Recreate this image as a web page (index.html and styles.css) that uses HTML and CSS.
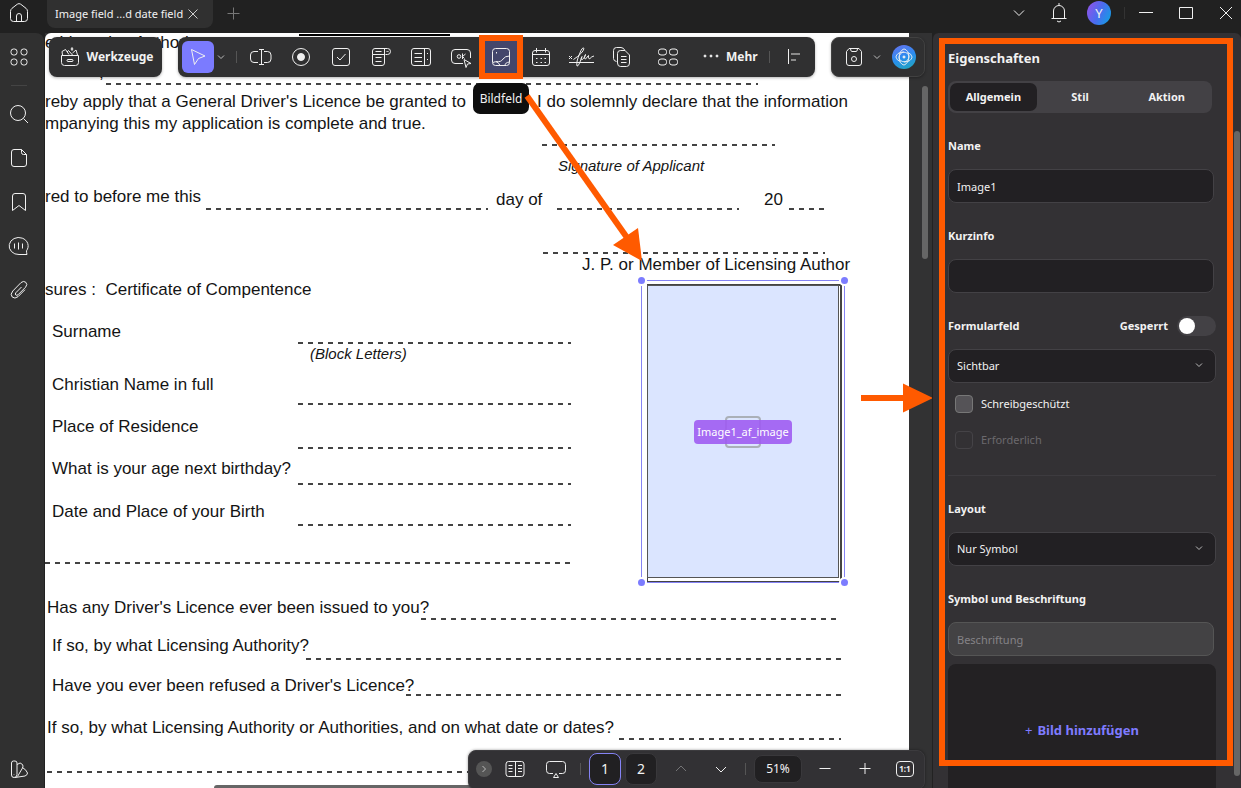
FILE: index.html
```html
<!DOCTYPE html>
<html lang="de">
<head>
<meta charset="utf-8">
<title>PDF-Formular bearbeiten</title>
<link rel="stylesheet" href="styles.css">
</head>
<body>
<div class="app">
  <header class="titlebar">
    <button class="home" aria-label="Start"><svg class="ic" viewBox="0 0 20 20"><path d="M1.5 8.500Q1.500 6.500 3 5.300L8.300 1.200Q10 0 11.700 1.200L17 5.300Q18.500 6.500 18.500 8.500V15.500Q18.500 18.500 15.500 18.500H4.500Q1.500 18.500 1.500 15.500ZM7.500 18.500V13a2.500 2.500 0 0 1 5 0V18.500"/></svg></button>
    <div class="filetab"><span>Image field ...d date field</span><button aria-label="Tab schließen"><svg class="ic tiny" viewBox="0 0 10 10"><path d="M0.500 0.500L9.500 9.500M9.500 0.500L0.500 9.500"/></svg></button></div>
    <button class="newtab" aria-label="Neuer Tab"><svg class="ic dim" viewBox="0 0 20 20"><path d="M10.500 4.500V16.500M4.500 10.500H16.500"/></svg></button>
    <div class="winctl">
      <button aria-label="Mehr Tabs"><svg class="ic" viewBox="0 0 20 20"><path d="M5 7.500L10 12.500L15 7.500"/></svg></button>
      <button aria-label="Benachrichtigungen"><svg class="ic" viewBox="0 0 20 20"><path d="M4.500 15V8a5.500 5.500 0 0 1 11 0V15M2.500 15.500H17.500M10 2.500V0M8 18Q10 20 12 18"/></svg></button>
      <button class="avatar" aria-label="Konto">Y</button>
      <i class="vline"></i>
      <button aria-label="Minimieren"><svg class="ic" viewBox="0 0 20 20"><path d="M3 9.500H17"/></svg></button>
      <button aria-label="Maximieren"><svg class="ic" viewBox="0 0 20 20"><path d="M3.500 4.500H16.500V15.500H3.500Z"/></svg></button>
      <button aria-label="Schließen"><svg class="ic" viewBox="0 0 20 20"><path d="M4 4L16 16M16 4L4 16"/></svg></button>
    </div>
  </header>

  <div class="work">
    <nav class="rail">
      <button aria-label="Übersicht"><svg class="ic" viewBox="0 0 20 20"><rect x="2" y="2" width="6" height="6" rx="2.500"/><rect x="12" y="2" width="6" height="6" rx="2.500"/><rect x="2" y="12" width="6" height="6" rx="2.500"/><rect x="12" y="12" width="6" height="6" rx="2.500"/></svg></button>
      <hr>
      <button aria-label="Suchen"><svg class="ic" viewBox="0 0 20 20"><circle cx="9" cy="9" r="7.500"/><path d="M14.500 14.500L19 19"/></svg></button>
      <button aria-label="Seiten"><svg class="ic" viewBox="0 0 20 20"><path d="M12.500 1.500H5Q2.500 1.500 2.500 4V16Q2.500 18.500 5 18.500H15Q17.500 18.500 17.500 16V6.500ZM12.500 1.500V4.500Q12.500 6.500 14.500 6.500H17.500"/></svg></button>
      <button aria-label="Lesezeichen"><svg class="ic" viewBox="0 0 20 20"><path d="M3.500 18.500V4Q3.500 1.500 6 1.500H14Q16.500 1.500 16.500 4V18.500L10 13.500Z"/></svg></button>
      <button aria-label="Kommentare"><svg class="ic" viewBox="0 0 20 20"><path d="M18 18.500H10A9.500 8.500 0 1 1 17.500 14.800Q17.500 16.800 18 18.500ZM5.500 7.500V12.500M9.500 6.500V13.500M13.500 7.500V12.500"/></svg></button>
      <button aria-label="Anhänge"><svg class="ic" viewBox="0 0 20 20"><path d="M12.500 7L6.800 12.800Q5.800 14.200 6.800 15Q7.800 15.700 9 14.800L16.600 7.200Q19 4.300 16.700 2.200Q14.500 .5 12 2.600L3.800 11Q.8 14.500 3.200 17Q5.800 19.300 9 16.700L16 9.700"/></svg></button>
      <button class="last" aria-label="Design"><svg class="ic" viewBox="0 0 20 20"><path d="M2.500 4Q2.500 2 4.500 2H6Q8 2 8 4V15.500Q8 18.500 5 18.500Q2.500 18.500 2.500 16ZM8 5.500Q11.500 2.500 13.500 5.500Q14.500 7 13.500 9L8.500 17.500M13.500 8.500Q17.500 11 18.500 14Q18.500 16 16 17L6 18.500M5 15.500V16"/></svg></button>
    </nav>

    <main class="viewport">
      <article class="page">
        <div class="row r0"><span>e Licensing Authority</span><i class="bar"></i></div>
        <div class="row r1"><span>,</span><i class="rule h22"></i></div>
        <p class="para"><span class="lead">reby apply that a General Driver's Licence be granted to</span>I do solemnly declare that the information<br>mpanying this my application is complete and true.</p>
        <div class="row r3"><i class="rule h12"></i></div>
        <div class="row r4 note">Signature of Applicant</div>
        <div class="row r5"><span class="w162">red to before me this</span><i class="rule w282"></i><span class="low day">day of</span><i class="rule w182"></i><span class="low year">20</span><i class="rule w36"></i></div>
        <div class="row r6"><i class="rule h12"></i></div>
        <div class="row r7"><span>J. P. or Member of Licensing Author</span></div>
        <div class="row r8"><span>sures :&nbsp; Certificate of Compentence</span></div>
        <div class="field r9"><span>Surname</span><i class="rule h22"></i></div>
        <div class="row r9b note">(Block Letters)</div>
        <div class="field r10"><span>Christian Name in full</span><i class="rule h30"></i></div>
        <div class="field r11"><span>Place of Residence</span><i class="rule h32"></i></div>
        <div class="field r12"><span>What is your age next birthday?</span><i class="rule h26"></i></div>
        <div class="field r13"><span>Date and Place of your Birth</span><i class="rule h24"></i></div>
        <div class="row r14"><i class="rule h12"></i></div>
        <div class="row ask r15"><span>Has any Driver's Licence ever been issued to you?</span><i class="rule h22"></i></div>
        <div class="row ask in r16"><span>If so, by what Licensing Authority?</span><i class="rule h24"></i></div>
        <div class="row ask in r17"><span>Have you ever been refused a Driver's Licence?</span><i class="rule h20"></i></div>
        <div class="row ask r18"><span>If so, by what Licensing Authority or Authorities, and on what date or dates?</span><i class="rule h22"></i></div>
        <div class="row r19"><i class="rule h12"></i></div>
      </article>

      <div class="imgfield">
        <div class="outline"></div>
        <div class="fill"><i class="ghost"></i><span>Image1_af_image</span></div>
        <i class="dot tl"></i><i class="dot tr"></i><i class="dot bl"></i><i class="dot br"></i>
      </div>
      <i class="vthumb"></i><i class="hthumb"></i>

      <div class="tools">
        <button class="island werk"><svg class="ic" viewBox="0 0 20 20"><path d="M1.500 8.500H18.500V15.500Q18.500 18.500 15.500 18.500H4.500Q1.500 18.500 1.500 15.500ZM7 13.500Q7 12.500 8 12.500H12Q13 12.500 13 13.500Q13 14.500 12 14.500H8Q7 14.500 7 13.500ZM2.500 8L2 4.500L5.500 2.500L9 7.500M7 5L8.500 3.500L12.500 8M12 .5L13 2L12 3.500L11 2ZM12.500 6L16 3L17.500 8"/></svg>Werkzeuge</button>
        <div class="island main">
          <button class="cursor" aria-label="Auswahl"><svg class="ic" viewBox="0 0 20 20"><path d="M3.500 2.500L17 9L10.500 11.500L6.500 17.500Z"/></svg></button>
          <svg class="ic caret" viewBox="0 0 10 10"><path d="M2 3.500L5 6.500L8 3.500"/></svg>
          <i class="sep"></i>
          <div class="icons">
            <button aria-label="Textfeld"><svg class="ic wide" viewBox="0 0 24 20"><path d="M9 4.500H5Q1.500 4.500 1.500 8V12Q1.500 15.500 5 15.500H9M15 4.500H18.500Q22 4.500 22 8V12Q22 15.500 18.500 15.500H15M12.500 2.500V17.500M10 2.500H15M10 17.500H15"/></svg></button>
            <button aria-label="Optionsfeld"><svg class="ic" viewBox="0 0 20 20"><circle cx="10" cy="10" r="8.500"/><circle class="solid" cx="10" cy="10" r="3.500"/></svg></button>
            <button aria-label="Kontrollkästchen"><svg class="ic" viewBox="0 0 20 20"><rect x="1.500" y="1.500" width="17" height="17" rx="2.500"/><path d="M6 10L9 13L14.500 7"/></svg></button>
            <button aria-label="Dropdown"><svg class="ic" viewBox="0 0 20 20"><path d="M13.500 7.500H1.500V4Q1.500 1.500 4 1.500H16.500Q19.500 1.500 19.500 4.500Q19.500 7.500 16.500 7.500H14.500M13.500 1.500V16Q13.500 18.500 11 18.500H4Q1.500 18.500 1.500 16V7.500M4.500 4.500H10.500M4.500 10.500H10.500M4.500 14.500H10.500M15.500 4L16.500 5L17.500 4"/></svg></button>
            <button aria-label="Listenfeld"><svg class="ic" viewBox="0 0 20 20"><rect x=".5" y="1.500" width="19" height="17" rx="2.500"/><path d="M13.500 1.500V18.500M3.500 6.500H11M3.500 10.500H11M3.500 14.500H11M16 6.500H17M16 12.500H17"/></svg></button>
            <button aria-label="Schaltfläche"><svg class="ic" viewBox="0 0 20 20"><path d="M12 16.500H4Q.5 16.500 .5 13V6Q.5 2.500 4 2.500H16Q19.500 2.500 19.500 6V11M13 12.500L15 20.500L16.500 17L20 16.500Z"/><circle cx="8" cy="9.500" r="1.800"/><path d="M11.500 6.500V12M14.500 7L11.500 9.500L13.500 11.500"/></svg></button>
            <button class="picked" aria-label="Bildfeld"><svg class="ic" viewBox="0 0 20 20"><rect x="1.500" y="1.500" width="17" height="17" rx="3"/><path d="M2 15.500Q6.500 13 9 18.500M5 14.500Q10 15.500 12 12Q14 9 18.500 9M14 18.500Q14 15.500 18.500 15M5.500 5V6.500"/></svg></button>
            <button aria-label="Datumsfeld"><svg class="ic" viewBox="0 0 20 20"><rect x="1.500" y="3.500" width="17" height="15" rx="2.500"/><path d="M5.500 1V5.500M14.500 1V5.500M1.500 7.500H18.500M5 11.500H6.500M9.500 11.500H11M13.500 11.500H15M5 15.500H6.500M9.500 15.500H11M13.500 15.500H15"/></svg></button>
            <button aria-label="Unterschrift"><svg class="ic sig" viewBox="0 0 26 20"><path d="M1 9L4 12M4 9L1 12M1 15.500H26M5.500 12.500Q15 6 16 1.500Q14.500 -1 11.500 7Q8 15 9 19Q10.500 20 14 9.500Q12 13.500 14.500 12.500Q17 10 17.500 7.500Q15.500 12 17.500 12L20.500 8.500Q20 12.500 22 11.500Q23.500 9.500 26 9"/></svg></button>
            <button aria-label="Duplizieren"><svg class="ic" viewBox="0 0 20 20"><path d="M5.500 14.500Q2.500 14 2.500 11.500V3.500Q2.500 .5 5.500 .5H10Q12.500 .5 14 3.500M9.500 3.500H14L18.500 8V16Q18.500 19.500 15.500 19.500H9.500Q6.500 19.500 6.500 16V6.500Q6.500 3.500 9.500 3.500ZM10 9.500H15.500M10 12.500H15.500M10 15.500H15.500"/></svg></button>
          </div>
          <button class="grid4" aria-label="Ausrichten"><svg class="ic" viewBox="0 0 20 20"><rect x=".5" y="2" width="8" height="6" rx="2.500"/><rect x="11.500" y="2" width="8" height="6" rx="2.500"/><rect x=".5" y="12" width="8" height="6" rx="2.500"/><rect x="11.500" y="12" width="8" height="6" rx="2.500"/></svg></button>
          <button class="more"><svg class="ic" viewBox="0 0 20 20"><circle class="solid" cx="4" cy="9" r="1"/><circle class="solid" cx="10" cy="9" r="1"/><circle class="solid" cx="16" cy="9" r="1"/></svg>Mehr</button>
          <i class="sep"></i>
          <button class="align" aria-label="Linksbündig"><svg class="ic" viewBox="0 0 20 20"><path d="M4.500 2V17"/><path class="soft" d="M7 7H16M7 13H12"/></svg></button>
        </div>
        <div class="island save">
          <button aria-label="Speichern"><svg class="ic" viewBox="0 0 20 20"><path d="M5 1.500H15L17.500 4.500V16Q17.500 18.500 15 18.500H5Q2.500 18.500 2.500 16V4.500ZM6.500 1.500Q6.500 4.500 8 4.500H12Q13.500 4.500 13.500 1.500"/><circle cx="10" cy="12" r="2.500"/></svg></button>
          <svg class="ic caret" viewBox="0 0 10 10"><path d="M2 3.500L5 6.500L8 3.500"/></svg>
          <button class="ai" aria-label="KI-Assistent"><svg class="ic" viewBox="0 0 20 20"><path d="M1 10Q2 5 9 4.500Q15.500 5 15.500 10Q15 17 10 19Q5 17.500 4.500 11Q5 5 10 4.500M19 10Q18 15 11 15.500Q4.500 15 4.500 10Q5 3 10 1Q15 2.500 15.500 9Q15 15 10 15.500M1 10Q2 14 6 15M19 10Q18 6 14 5"/><circle class="solid" cx="10" cy="10" r="1.200"/></svg></button>
        </div>
      </div>
      <div class="tip" role="tooltip">Bildfeld</div>

      <div class="pager">
        <button class="round" aria-label="Einklappen"><svg class="ic caret" viewBox="0 0 10 10"><path d="M3.500 2L6.500 5L3.500 8"/></svg></button>
        <button class="book" aria-label="Leseansicht"><svg class="ic" viewBox="0 0 20 20"><rect x="1" y="2.500" width="18" height="15" rx="2.500"/><path d="M10.500 2.500V17.500M3.500 6.500H7.500M3.500 9.500H7.500M3.500 12.500H7.500M13 6.500H17M13 9.500H17M13 12.500H17"/></svg></button>
        <button class="screen" aria-label="Präsentation"><svg class="ic" viewBox="0 0 20 20"><path d="M7 14.500H3.500Q.5 14.500 .5 11.500V5.500Q.5 2.500 3.500 2.500H16.500Q19.500 2.500 19.500 5.500V11.500Q19.500 14.500 16.500 14.500H13M10 14.500L12.500 18.500H7.500Z"/></svg></button>
        <i class="sep"></i>
        <button class="num on">1</button><button class="num">2</button>
        <button class="step off" aria-label="Vorherige Seite"><svg class="ic" viewBox="0 0 20 20"><path d="M5 12L10 7L15 12"/></svg></button>
        <button class="step" aria-label="Nächste Seite"><svg class="ic" viewBox="0 0 20 20"><path d="M5 8L10 13L15 8"/></svg></button>
        <i class="sep"></i>
        <button class="zoom">51%</button>
        <button class="step minus" aria-label="Verkleinern"><svg class="ic" viewBox="0 0 20 20"><path d="M4.500 9.500H15.500"/></svg></button>
        <button class="step" aria-label="Vergrößern"><svg class="ic" viewBox="0 0 20 20"><path d="M4.500 9.500H15.500M10 4V15"/></svg></button>
        <button class="step fit" aria-label="Originalgröße"><span>1:1</span></button>
      </div>

      <svg class="arrow a1" viewBox="0 0 140 180"><path class="shaft" d="M16 13L117 156"/><path class="head" d="M102 162L127 145L131 178Z"/></svg>
      <svg class="arrow a2" viewBox="0 0 80 40"><path class="shaft" d="M5 20H50"/><path class="head" d="M47 5.500L77 20L47 34.500Z"/></svg>
    </main>

    <aside class="panel">
      <h2>Eigenschaften</h2>
      <div class="tabs"><button class="on">Allgemein</button><button>Stil</button><button>Aktion</button></div>
      <form>
        <div class="grp"><label for="n">Name</label><input id="n" type="text" value="Image1"></div>
        <div class="grp"><label for="k">Kurzinfo</label><input id="k" type="text"></div>
        <div class="grp wide">
          <div class="line"><label for="f">Formularfeld</label><label class="lock">Gesperrt<input class="switch" type="checkbox"></label></div>
          <div class="sel"><select id="f"><option>Sichtbar</option></select><svg class="ic caret" viewBox="0 0 10 10"><path d="M2 3.500L5 6.500L8 3.500"/></svg></div>
        </div>
        <label class="check"><input type="checkbox">Schreibgeschützt</label>
        <label class="check off"><input type="checkbox" disabled>Erforderlich</label>
        <hr>
        <div class="grp wide"><label for="l">Layout</label>
          <div class="sel"><select id="l"><option>Nur Symbol</option></select><svg class="ic caret" viewBox="0 0 10 10"><path d="M2 3.500L5 6.500L8 3.500"/></svg></div></div>
        <div class="grp"><label for="b">Symbol und Beschriftung</label><input id="b" type="text" placeholder="Beschriftung" disabled></div>
        <button type="button" class="drop"><span>+</span> Bild hinzufügen</button>
      </form>
      <i class="pthumb"></i>
      <i class="frame"></i>
    </aside>
  </div>
</div>
</body>
</html>
```
FILE: styles.css
```css
* { box-sizing: border-box; }
body { margin: 0; background: #212121; color: #f2f2f2; font: 12px/20px "Noto Sans", sans-serif; overflow: hidden; }
button, input, select { font: inherit; color: inherit; }
button { background: none; border: 0; padding: 0; display: flex; align-items: center; justify-content: center; flex: none; }
i { display: block; flex: none; }
.app { height: 100vh; display: flex; flex-direction: column; }
.ic { width: 20px; height: 20px; fill: none; stroke: #f0f0f0; stroke-linejoin: round; display: block; flex: none; overflow: visible; }
.ic .solid { fill: #f0f0f0; }
.ic.caret { width: 10px; height: 10px; stroke: #bbb; }
.ic.tiny { width: 10px; height: 10px; stroke: #ccc; }
.ic.dim { stroke: #777; }
.ic .soft { stroke: #8a8a8a; stroke-width: 2; }
.ic.wide { width: 24px; }
.ic.sig { width: 26px; }
.sep { width: 1px; height: 12px; background: #555; }

.titlebar { height: 33px; flex: none; display: flex; align-items: flex-start; background: #212121; font-size: 11px; }
.home { width: 38px; height: 26px; }
.filetab { margin-left: 9px; height: 28px; padding: 0 15px 0 8px; display: flex; align-items: center; gap: 5px; background: #303030; border-radius: 0 0 8px 8px; }
.newtab { height: 26px; margin-left: 10px; }
.winctl { margin-left: auto; display: flex; align-items: center; gap: 10px; height: 26px; }
.winctl button { width: 30px; height: 26px; }
.winctl .avatar { width: 24px; height: 24px; margin: 0 3px; border-radius: 50%; background: linear-gradient(115deg, #9a50e8, #4a6cf0 50%, #0aa6e0); font-size: 13px; }
.winctl .vline { width: 1px; height: 12px; background: #333; margin-right: -4px; }

.work { flex: 1; min-height: 0; display: flex; }
.rail { width: 44px; flex: none; padding: 10px 6px 5px 0; background: #303030; border-radius: 0 8px 0 0; display: flex; flex-direction: column; align-items: center; }
.rail button { width: 38px; height: 28px; margin-bottom: 16px; }
.rail hr { width: 16px; margin: -2px 0 14px; border: 0; border-top: 1px solid #444; }
.rail .last { margin: auto 0 0; }

.viewport { flex: 1; min-width: 0; position: relative; overflow: hidden; margin-left: 1px; padding-right: 23px; background: #323233; }
.page { height: 100%; background: #fff; color: #141414; font: 17px/20px "Liberation Sans", Arial, sans-serif; overflow: hidden; white-space: nowrap; border-radius: 6px 0 0 0; }
.row { display: flex; align-items: flex-start; }
.field { display: grid; grid-template-columns: 246px 273px; padding-left: 7px; align-items: start; }
.rule { height: 23px; width: 282px; background: repeating-linear-gradient(90deg, #222 0 5px, transparent 5px 10px) left bottom / 100% 2px no-repeat; opacity: .85; }
.field .rule { width: 273px; }
.h12 { height: 12px; } .h20 { height: 20px; } .h22 { height: 22px; } .h24 { height: 24px; }
.h26 { height: 26px; } .h30 { height: 30px; } .h32 { height: 32px; }
.note { font-size: 15px; font-style: italic; }
.r0 .bar { width: 151px; height: 2px; background: #000; margin: 1px 0 0 auto; }
.r0 { width: 405px; }
.r1 { margin-top: 10px; padding-left: 54px; gap: 2px; }
.r1 .rule { width: 652px; }
.para { margin: 6px 0 0; line-height: 22px; }
.lead { display: inline-block; width: 492px; }
.r3 { margin-top: -1px; padding-left: 497px; }
.r3 .rule { width: 233px; }
.r4 { margin-top: 10px; padding-left: 513px; }
.r5 { margin-top: 11px; }
.r5 .w162 { width: 161px; }
.r5 .low { line-height: 26px; }
.r5 .day { width: 69px; padding-left: 8px; }
.r5 .year { width: 50px; padding-left: 25px; }
.r5 .w182 { width: 182px; }
.r5 .w36 { width: 36px; }
.r6 { margin-top: 29px; padding-left: 498px; }
.r7 { margin-top: 1px; padding-left: 537px; }
.r8 { margin-top: 5px; }
.r9 { margin-top: 22px; }
.r9b { padding-left: 265px; }
.r10 { margin-top: 11px; }
.r11 { margin-top: 12px; }
.r12 { margin-top: 10px; }
.r13 { margin-top: 17px; }
.r14 { margin-top: 26px; }
.r14 .rule { width: 528px; }
.ask { width: 796px; padding-left: 2px; }
.ask.in { padding-left: 7px; }
.ask .rule { flex: 1; width: auto; margin-left: -8px; }
.r15 { margin-top: 34px; }
.r16 { margin-top: 16px; }
.r16 .rule { margin-left: -3px; }
.r17 { margin-top: 16px; }
.r18 { margin-top: 22px; }
.r18 .rule { margin-left: 5px; }
.r19 { margin-top: 21px; padding-left: 2px; }
.r19 .rule { width: 440px; }

.imgfield { position: absolute; left: 596px; top: 247px; width: 204px; height: 303px; border: 1px solid #8583f5; padding: 3px 2px 0 5px; }
.outline { position: absolute; inset: 3px 2px 0 5px; border: solid #444; border-width: 2px 2px 1px 1px; }
.fill { position: relative; width: 192px; height: 293px; margin-top: 1px; background: #dbe5ff; border: 1px solid #555; display: flex; align-items: center; justify-content: center; }
.fill span { position: relative; background: rgba(158, 92, 242, .9); color: #fff; border-radius: 4px; font-size: 11px; line-height: 24px; padding: 0 3px; }
.ghost { position: absolute; width: 36px; height: 32px; border: 2px solid #aab0b8; border-radius: 4px; }
.dot { position: absolute; width: 7px; height: 7px; border-radius: 50%; background: #7c7cff; box-shadow: 0 0 0 2px #fff; }
.tl { left: -4px; top: -4px; } .tr { right: -4px; top: -4px; } .bl { left: -4px; bottom: -4px; } .br { right: -4px; bottom: -4px; }
.vthumb { position: absolute; right: 4px; top: 53px; width: 6px; height: 173px; border-radius: 3px; background: #666; }
.hthumb { position: absolute; left: 169px; bottom: 0; width: 500px; height: 3px; border-radius: 3px 3px 0 0; background: #666; }

.tools { position: absolute; top: 4px; left: 4px; right: 7px; display: flex; gap: 16px; }
.island { height: 40px; background: #303031; border-radius: 8px; display: flex; align-items: center; box-shadow: 0 1px 3px rgba(0, 0, 0, .3); }
.werk { width: 113px; gap: 7px; padding-left: 2px; font-weight: 700; }
.main { flex: 1; padding-left: 4px; min-width: 0; }
.cursor { width: 32px; height: 32px; border-radius: 6px; background: #7b7bff; }
.main > .caret { margin: 0 10px 0 2px; }
.icons { display: flex; gap: 12px; margin-left: 10px; }
.icons button { width: 28px; height: 28px; }
.icons .picked { background: #43466b; outline: 6px solid #ff5a00; outline-offset: 2px; box-shadow: 0 0 0 2px #43466b; }
.grid4 { margin-left: 23px; }
.more { margin-left: 23px; gap: 5px; font-weight: 700; }
.more + .sep { margin-left: 11px; }
.align { margin-left: 14px; }
.save { width: 94px; padding-left: 12px; border: 1px solid #414141; }
.save .caret { margin: 0 10px 0 8px; }
.ai { width: 24px; height: 24px; border-radius: 50%; background: linear-gradient(160deg, #6a70ee, #2a8df0 50%, #21a8b8); }
.ai .ic { width: 18px; height: 18px; }
.tip { position: absolute; left: 428px; top: 50px; width: 56px; height: 31px; line-height: 31px; border-radius: 7px; background: #0e0e0e; text-align: center; }

.pager { position: absolute; right: 7px; bottom: -2px; width: 457px; height: 40px; padding: 0 10px 2px 7px; background: #323134; border: 1px solid #3c3b3e; border-radius: 8px; display: flex; align-items: center; box-shadow: 0 0 3px rgba(0, 0, 0, .4); }
.round { width: 16px; height: 16px; border-radius: 50%; background: #555; }
.book { margin-left: 13px; }
.screen { margin: 0 14px 0 21px; }
.num { width: 32px; height: 32px; margin-left: 4px; border-radius: 8px; background: #212022; border: 1px solid #39383b; font-size: 14px; }
.sep + .num { margin-left: 8px; }
.num.on { border-color: #8583f5; }
.step { width: 20px; margin-left: 20px; }
.num + .step { margin-left: 14px; }
.step.off { opacity: .35; }
.step + .sep { margin: 0 8px 0 14px; }
.zoom { width: 48px; height: 28px; border-radius: 8px; background: #212022; border: 1px solid #39383b; }
.zoom + .step { margin-left: 13px; }
.fit span { width: 18px; height: 16px; border: 1px solid #f0f0f0; border-radius: 4px; font: 700 8px/14px "Noto Sans", sans-serif; }

.arrow { position: absolute; pointer-events: none; }
.shaft { stroke: #ff5a00; stroke-width: 6; fill: none; }
.head { fill: #ff5a00; }
.a1 { left: 466px; top: 50px; width: 140px; height: 180px; }
.a2 { left: 811px; top: 345px; width: 80px; height: 40px; }

.panel { width: 309px; flex: none; position: relative; overflow: hidden; padding: 15px 25px 0 15px; background: #333134; border-left: 1px solid #222; border-radius: 6px 6px 0 0; font-size: 11px; }
h2 { margin: 0; font-size: 13px; line-height: 20px; }
.tabs { display: flex; margin: 13px 4px 0 0; height: 32px; padding: 2px; background: #434145; border-radius: 8px; }
.tabs button { flex: 1; font-weight: 700; border-radius: 7px; }
.tabs .on { background: #222023; }
form { display: flex; flex-direction: column; margin-top: 23px; }
.grp { display: flex; flex-direction: column; gap: 13px; margin: 0 2px 23px 0; font-weight: 700; }
.grp.wide { margin-right: 0; }
.grp input[type=text], select { width: 100%; height: 34px; padding: 0 8px; background: #222023; border: 1px solid #434145; border-radius: 8px; font-weight: 400; appearance: none; outline: 0; opacity: 1; }
.grp input[type=text]:disabled { background: #434244; border-color: #555; }
input::placeholder { color: #858387; }
.line, .lock { display: flex; align-items: center; }
.line { justify-content: space-between; height: 20px; }
.lock { gap: 9px; }
.switch { appearance: none; width: 39px; height: 20px; margin: 0; padding: 2px; border-radius: 10px; background: #434145; }
.switch::before { content: ""; display: block; width: 16px; height: 16px; border-radius: 50%; background: #fff; }
.sel { display: grid; align-items: center; }
.sel select, .sel .caret { grid-area: 1 / 1; }
.sel .caret { justify-self: end; margin: 0 12px 2px 0; pointer-events: none; }
.check { display: flex; align-items: center; gap: 8px; height: 20px; margin: 0 0 16px 7px; }
.grp + .check { margin-top: -12px; }
.check input { appearance: none; margin: 0; width: 18px; height: 18px; background: #555357; border: 1px solid #777; border-radius: 4px; }
.check.off { color: #6b696d; }
.check.off input { background: none; border-color: #454347; }
form hr { width: 100%; margin: 9px 0 23px; border: 0; border-top: 1px solid #3d3b3f; }
.drop { height: 132px; margin-top: -15px; border-radius: 8px; background: #232123; color: #7f7bff; font-size: 13px; font-weight: 700; gap: 5px; }
.drop span { font-weight: 400; }
.pthumb { position: absolute; right: 1px; top: 98px; width: 6px; bottom: 12px; border-radius: 3px; background: #666; }
.frame { position: absolute; left: 6px; right: 8px; top: 5px; bottom: 22px; border: 6px solid #ff5a00; pointer-events: none; }
```
